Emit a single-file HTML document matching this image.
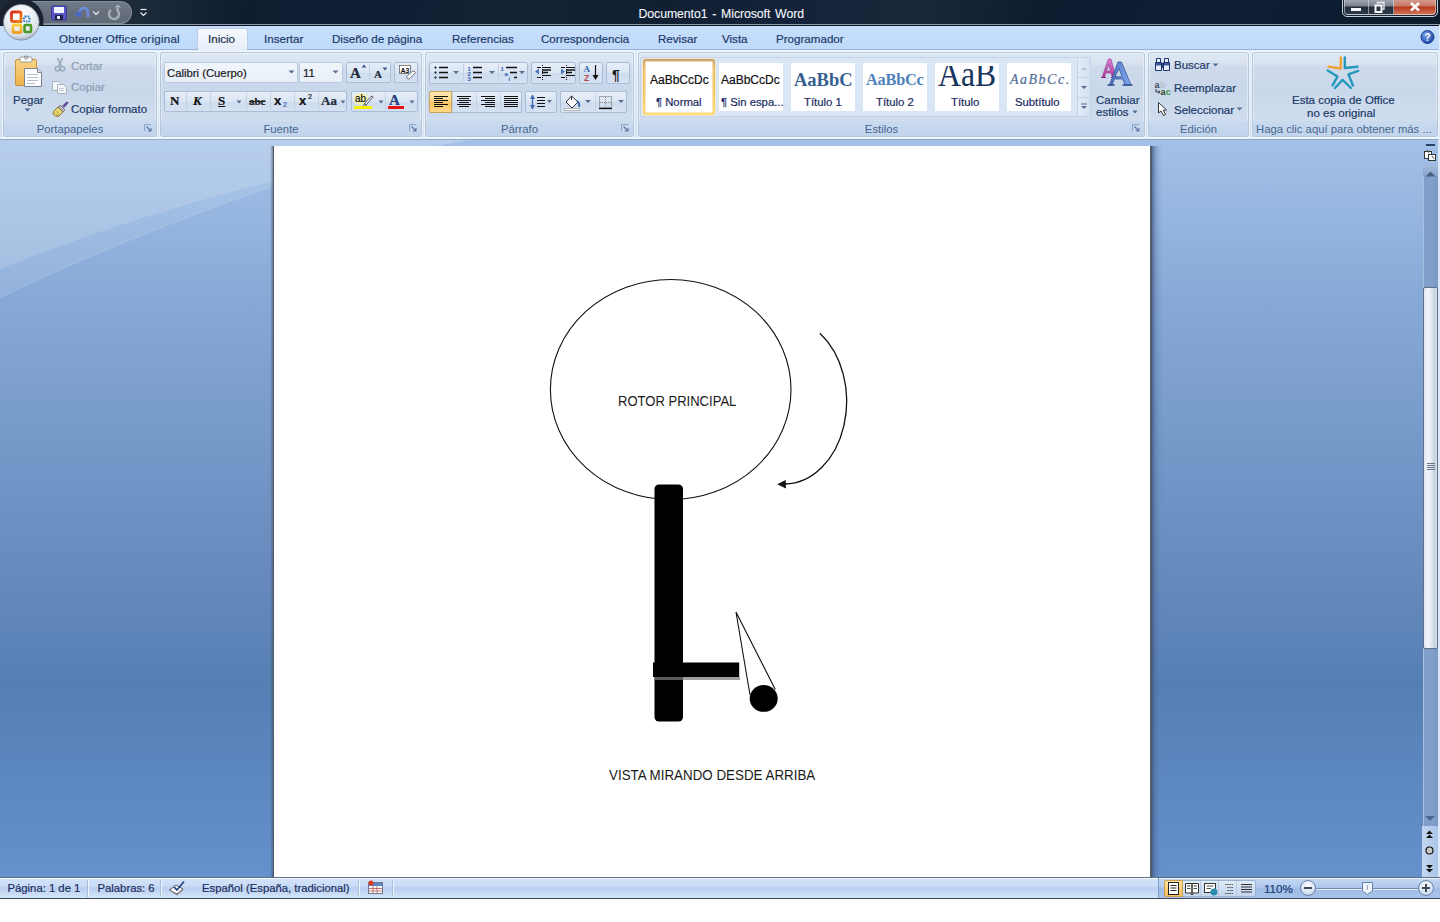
<!DOCTYPE html>
<html><head><meta charset="utf-8">
<style>
*{margin:0;padding:0;box-sizing:border-box}
html,body{width:1440px;height:922px;overflow:hidden;background:#fff;font-family:"Liberation Sans",sans-serif;font-size:11.5px;color:#1c3a68}
.a{position:absolute}
.t{position:absolute;white-space:nowrap;line-height:14px;-webkit-text-stroke:.2px currentColor}
#title{left:0;top:0;width:1440px;height:26px;background:linear-gradient(105deg,#1b2838 0%,#1d2a3a 10%,#0f1d30 17%,#0e1e34 26%,#152434 36%,#101f32 46%,#14233a 56%,#182838 64%,#0e1c30 72%,#0f1e34 85%,#0c1a2c 100%);border-bottom:1px solid #0c1420;box-shadow:inset 0 -1px 0 #8b9aab}
#tabs{left:0;top:26px;width:1440px;height:24px;background:linear-gradient(#c6defc,#c0dafb)}
#ribbon{left:0;top:49px;width:1440px;height:91px;background:linear-gradient(#dcebfa,#d6e5f6 60%,#cfdff2);border-top:1px solid #9cb0d2;border-bottom:1px solid #94abc8}
#ribbon:before{content:"";position:absolute;left:0;right:0;top:0;height:2px;background:#e2f3fd}
#ribbon:after{content:"";position:absolute;left:0;right:0;bottom:0;height:2px;background:#e4f6fe}
.grp{position:absolute;top:52px;height:85px;border:1px solid #b6c6d8;border-radius:3px;background:linear-gradient(#dfe7f3 0%,#d9e3f0 13%,#cfdbec 17%,#c9d7eb 45%,#cfdcee 75%,#d6e2f1 100%);box-shadow:inset 0 0 0 1px rgba(255,255,255,.35),0 0 0 1px rgba(255,255,255,.55)}
.glab{position:absolute;left:0;right:0;bottom:0;height:15px;background:linear-gradient(#c9daef,#c1d4ec);text-align:center;line-height:14px;padding-top:1px;color:#46668f;font-size:11.3px}
.lnch{position:absolute;right:4px;bottom:4px}
.bx{position:absolute;border:1px solid #a9bdd8;border-radius:2px;background:linear-gradient(#e6eef8,#dae5f3 50%,#cfdcef 51%,#d6e2f2)}
.sp{position:absolute;top:1px;bottom:1px;width:1px;background:#c2d2e6}
#doc{left:0;top:140px;width:1439px;height:737px;background:linear-gradient(#a3c1e8 0%,#a1c0e7 1.4%,#87a9d7 21.7%,#7498c8 42%,#6689bd 60.3%,#557fb3 73.8%,#5d88c0 87.4%,#6591cc 100%)}
#page{left:273px;top:146px;width:877px;height:731px;background:#fff;border-left:1px solid #525c6c}
#shadow{left:1150px;top:146px;width:13px;height:731px;background:linear-gradient(90deg,#585f6e 0,#585f6e 1px,#4f5a6c 1px,#4f5a6c 2px,rgba(60,80,125,.72) 2px,rgba(75,100,145,.45) 4.5px,rgba(90,120,170,.2) 8px,rgba(100,130,180,0) 13px)}
#vscroll{left:1421px;top:140px;width:18px;height:738px;background:transparent}
#rightedge{left:1438px;top:140px;width:2px;height:737px;background:#dfe8f6}
#status{left:0;top:877px;width:1440px;height:22px;background:linear-gradient(#d3e4f9,#c9dcf6 40%,#b9d0f0 50%,#c6daf4 75%,#d6e5f8);border-top:1px solid #5f6d80;border-bottom:1px solid #3c4a5c;box-shadow:inset 0 1px 0 #f4f9ff}
.sep{position:absolute;top:880px;width:2px;height:17px;border-left:1px solid #a6bedd;border-right:1px solid #eef5fd}
</style></head><body>
<!-- TITLE BAR -->
<div id="title" class="a"></div>
<!-- QAT -->
<div class="a" style="left:30px;top:1px;width:102px;height:23px;border-radius:0 12px 12px 0;background:linear-gradient(#707a86,#666f7b 50%,#606a76);border:1px solid #838c98;border-left:none"></div>
<div class="a" style="left:0;top:0;width:46px;height:25px;background:radial-gradient(circle at 21px 21px,#1a2230 0,#1a2230 22px,rgba(26,34,48,0) 23px)"></div>
<svg class="a" style="left:50px;top:5px" width="18" height="16"><rect x="1.5" y="1" width="15" height="14" rx="1.5" fill="#5a56c8" stroke="#3a34a0"/><rect x="4" y="2" width="10" height="6" fill="#f0f2ff"/><rect x="5" y="10" width="8" height="5" fill="#1e2240"/><rect x="7" y="11" width="3" height="3" fill="#e8e8f8"/></svg>
<svg class="a" style="left:73px;top:5px" width="18" height="14"><path d="M6 9 Q7 3 11 3 Q15 3 15 8 V12" fill="none" stroke="#6a8ede" stroke-width="2.6"/><path d="M1 9 L8.5 6 L7.5 12.5 Z" fill="#4a6ad0"/></svg>
<svg class="a" style="left:92px;top:10px" width="8" height="6"><path d="M1 1.5 L4 4.5 L7 1.5" fill="none" stroke="#e8eef8" stroke-width="1.2"/></svg>
<svg class="a" style="left:105px;top:4px" width="18" height="17"><path d="M6 6 A 5 5 0 1 0 12.5 6.5 V4" fill="none" stroke="#a4aeb8" stroke-width="2.4"/><path d="M9.5 3.5 H16 L12.8 0.8 Z" fill="#b4bcc6"/></svg>
<svg class="a" style="left:139px;top:8px" width="9" height="9"><path d="M1.5 1.5 H7.5" stroke="#e8eef8" stroke-width="1.2"/><path d="M1.5 4.5 L4.5 7.5 L7.5 4.5" fill="none" stroke="#e8eef8" stroke-width="1.2"/></svg>
<div class="t" style="left:638.5px;top:7px;font-size:12.3px;color:#f2f6fb;letter-spacing:-.08px;word-spacing:1.5px;-webkit-text-stroke:.1px currentColor">Documento1 - Microsoft Word</div>
<!-- window buttons -->
<div class="a" style="left:1342px;top:-3px;width:96px;height:20px;border:1px solid #c4ccd6;border-radius:0 0 5px 5px;background:#1a2230"></div>
<div class="a" style="left:1344px;top:0;width:25px;height:15px;border:1px solid rgba(220,228,238,.55);border-top:none;border-radius:0 0 0 4px;background:linear-gradient(#a0a6ae,#7c848e 40%,#25303e 52%,#2c3846)"></div>
<div class="a" style="left:1369px;top:0;width:25px;height:15px;border:1px solid rgba(220,228,238,.55);border-top:none;border-left:none;background:linear-gradient(#a0a6ae,#7c848e 40%,#25303e 52%,#2c3846)"></div>
<div class="a" style="left:1394px;top:0;width:42px;height:15px;border:1px solid rgba(240,210,200,.6);border-top:none;border-left:none;border-radius:0 0 4px 0;background:linear-gradient(#d49a8c,#c87a66 40%,#b83a1c 52%,#c65a3e 80%,#cc7058)"></div>
<div class="a" style="left:1351px;top:8px;width:10px;height:3px;background:#f4f6fa"></div>
<svg class="a" style="left:1373px;top:1px" width="14" height="13"><path d="M4.5 3 V1.5 H11 V8 H9.5" fill="none" stroke="#f0f2f6" stroke-width="1.3"/><rect x="2.5" y="4.5" width="6" height="6.5" fill="#2c3642" stroke="#f8f9fb" stroke-width="2"/><rect x="4.6" y="6.6" width="1.8" height="2.3" fill="#2c3642"/></svg>
<svg class="a" style="left:1409px;top:1px" width="12" height="11"><path d="M2 2 L10 9.5 M10 2 L2 9.5" stroke="#fcfcfc" stroke-width="2.6"/></svg>
<!-- TABS -->
<div id="tabs" class="a"></div>
<div class="a" style="left:197px;top:28px;width:51px;height:23px;border:1px solid #b9cee8;border-bottom:none;border-radius:3px 3px 0 0;background:linear-gradient(#f6f9fd,#edf3fb 50%,#e6eef8)"></div>
<div class="t" style="left:59px;top:32px;font-size:11.6px;letter-spacing:.22px">Obtener Office original</div>
<div class="t" style="left:208px;top:32px;font-size:11.6px;color:#1e2f4e">Inicio</div>
<div class="t" style="left:264px;top:32px;font-size:11.6px">Insertar</div>
<div class="t" style="left:332px;top:32px;font-size:11.6px">Diseño de página</div>
<div class="t" style="left:452px;top:32px;font-size:11.6px">Referencias</div>
<div class="t" style="left:541px;top:32px;font-size:11.6px">Correspondencia</div>
<div class="t" style="left:658px;top:32px;font-size:11.6px">Revisar</div>
<div class="t" style="left:722px;top:32px;font-size:11.6px">Vista</div>
<div class="t" style="left:776px;top:32px;font-size:11.6px">Programador</div>
<svg class="a" style="left:1420px;top:29px" width="16" height="16"><defs><radialGradient id="hp" cx="40%" cy="35%" r="60%"><stop offset="0" stop-color="#7fa6ec"/><stop offset="1" stop-color="#1f4fb0"/></radialGradient></defs><circle cx="7.5" cy="8" r="6.5" fill="url(#hp)" stroke="#1a3f8a"/><text x="7.5" y="12" font-family="Liberation Sans" font-size="10" font-weight="bold" fill="#fff" text-anchor="middle">?</text></svg>
<!-- office button -->
<svg class="a" style="left:0;top:0" width="46" height="46"><defs><radialGradient id="ob" cx="45%" cy="30%" r="70%"><stop offset="0" stop-color="#ffffff"/><stop offset=".5" stop-color="#eef2f6"/><stop offset=".85" stop-color="#d4dce6"/><stop offset="1" stop-color="#a8b4c2"/></radialGradient><linearGradient id="lr" x1="0" y1="0" x2="1" y2="1"><stop offset="0" stop-color="#d8281a"/><stop offset="1" stop-color="#f08a20"/></linearGradient><linearGradient id="ly" x1="0" y1="0" x2="0" y2="1"><stop offset="0" stop-color="#f8d040"/><stop offset="1" stop-color="#f0a020"/></linearGradient></defs>
<circle cx="21.3" cy="22.3" r="17.8" fill="url(#ob)" stroke="#7c8898" stroke-width=".8"/>
<rect x="11.5" y="12" width="9.5" height="9.5" rx="1.5" fill="none" stroke="url(#lr)" stroke-width="2.8"/>
<rect x="24" y="16.5" width="5.5" height="5" rx="1" fill="none" stroke="#2a7ac8" stroke-width="2" stroke-dasharray="1.6 1"/>
<rect x="13" y="25" width="8" height="7.5" rx="1" fill="none" stroke="url(#ly)" stroke-width="2.8"/>
<rect x="24.5" y="25" width="6.5" height="7" rx="1" fill="none" stroke="#4a9a28" stroke-width="2.6"/>
<circle cx="21" cy="22" r="1.1" fill="#c05a20"/></svg>
<!-- RIBBON -->
<div id="ribbon" class="a"></div>
<div class="a" style="left:198px;top:48px;width:49px;height:3px;background:linear-gradient(#e6eef8,#e2f0fc)"></div>
<div class="grp" style="left:3px;width:154px"><div class="glab" style="padding-right:20px">Portapapeles</div><svg class="lnch" width="8" height="8"><path d="M0.5 7 V0.5 H7" fill="none" stroke="#8aa4c8"/><path d="M2.5 2.5 L5.5 5.5" stroke="#5b76a0" stroke-width="1.2"/><path d="M7.5 3.5 V7.5 H3.5 Z" fill="#5b76a0"/></svg></div>
<div class="grp" style="left:160px;width:262px"><div class="glab" style="padding-right:20px">Fuente</div><svg class="lnch" width="8" height="8"><path d="M0.5 7 V0.5 H7" fill="none" stroke="#8aa4c8"/><path d="M2.5 2.5 L5.5 5.5" stroke="#5b76a0" stroke-width="1.2"/><path d="M7.5 3.5 V7.5 H3.5 Z" fill="#5b76a0"/></svg></div>
<div class="grp" style="left:425px;width:209px"><div class="glab" style="padding-right:20px">Párrafo</div><svg class="lnch" width="8" height="8"><path d="M0.5 7 V0.5 H7" fill="none" stroke="#8aa4c8"/><path d="M2.5 2.5 L5.5 5.5" stroke="#5b76a0" stroke-width="1.2"/><path d="M7.5 3.5 V7.5 H3.5 Z" fill="#5b76a0"/></svg></div>
<div class="grp" style="left:638px;width:507px"><div class="glab" style="padding-right:20px">Estilos</div><svg class="lnch" width="8" height="8"><path d="M0.5 7 V0.5 H7" fill="none" stroke="#8aa4c8"/><path d="M2.5 2.5 L5.5 5.5" stroke="#5b76a0" stroke-width="1.2"/><path d="M7.5 3.5 V7.5 H3.5 Z" fill="#5b76a0"/></svg></div>
<div class="grp" style="left:1148px;width:101px"><div class="glab">Edición</div></div>
<div class="grp" style="left:1252px;width:186px"><div class="glab" style="text-align:left;padding-left:3px">Haga clic aquí para obtener más ...</div></div>
<!-- PORTAPAPELES -->
<svg class="a" style="left:13px;top:55px" width="32" height="34"><defs><linearGradient id="cb" x1="0" y1="0" x2="0" y2="1"><stop offset="0" stop-color="#f7d488"/><stop offset="1" stop-color="#eeb34a"/></linearGradient></defs>
<rect x="2.5" y="4.5" width="21" height="26" rx="1.5" fill="url(#cb)" stroke="#c9953c"/>
<rect x="7" y="2" width="12" height="5" rx="1" fill="#fdfdfd" stroke="#8a8a8a" stroke-width=".8"/><circle cx="13" cy="2.5" r="1.6" fill="none" stroke="#777" stroke-width=".8"/>
<path d="M11.5 13.5 H24.5 L28.5 17.5 V31.5 H11.5 Z" fill="#fbfcfe" stroke="#7b8494"/><path d="M24.5 13.5 V17.5 H28.5" fill="#dfe3ea" stroke="#7b8494"/>
<path d="M14 19.5 H25 M14 22.5 H25 M14 25.5 H25 M14 28.5 H22" stroke="#b8c0cc" stroke-width="1"/></svg>
<div class="t" style="left:13px;top:93px">Pegar</div>
<svg class="a" style="left:24px;top:108px" width="7" height="4"><path d="M0.5 0.5 H6.5 L3.5 3.5 Z" fill="#4c6a98"/></svg>
<svg class="a" style="left:53px;top:57px" width="14" height="15"><path d="M4.5 1 L8.2 9.2 M9.5 1 L5.8 9.2" stroke="#9aaabe" stroke-width="1.7"/><circle cx="4.5" cy="11.8" r="2.2" fill="none" stroke="#9aaabe" stroke-width="1.5"/><circle cx="9.5" cy="11.8" r="2.2" fill="none" stroke="#9aaabe" stroke-width="1.5"/></svg>
<div class="t" style="left:71px;top:58.5px;color:#8d9db3">Cortar</div>
<svg class="a" style="left:51px;top:80px" width="17" height="14"><path d="M1.5 1.5 H7.5 L9.5 3.5 V10.5 H1.5 Z" fill="#f4f6f8" stroke="#a9b3c0"/><path d="M6.5 4.5 H12.5 L15.5 7.5 V13.5 H6.5 Z" fill="#f4f6f8" stroke="#a9b3c0"/><path d="M8 8.5 H13 M8 10.5 H13" stroke="#c0c8d2"/></svg>
<div class="t" style="left:71px;top:79.5px;color:#8d9db3">Copiar</div>
<svg class="a" style="left:52px;top:101px" width="17" height="16"><path d="M10.5 5 L14.5 1 Q16 0.5 16 2 L12 6.5 Z" fill="#6a4c9c" stroke="#4a3078" stroke-width=".6"/><path d="M8 4 L13 9 L11 11 L6 6 Z" fill="#b8b8c8" stroke="#555" stroke-width=".6"/><path d="M6 6 L11 11 L6.5 15.5 Q3 15.5 1 13 Q1 10.5 1.5 10.5 Z" fill="#e8d470" stroke="#6a5a20" stroke-width=".8"/><path d="M3 11.5 L6.5 15 M4.5 10 L8 13.5" stroke="#b09838" stroke-width=".7"/></svg>
<div class="t" style="left:71px;top:102px">Copiar formato</div>
<!-- FUENTE -->
<div class="a" style="left:164px;top:62px;width:134px;height:21px;border:1px solid #b9cbe2;border-radius:2px;background:linear-gradient(#f0f5fb,#e8eff8)"></div>
<div class="t" style="left:167px;top:65.5px;color:#1a1a1a;font-size:11.3px">Calibri (Cuerpo)</div>
<svg class="a" style="left:288px;top:70px" width="7" height="4"><path d="M0.5 0.5 H6.5 L3.5 3.5 Z" fill="#5a6f90"/></svg>
<div class="a" style="left:299px;top:62px;width:44px;height:21px;border:1px solid #b9cbe2;border-radius:2px;background:linear-gradient(#f0f5fb,#e8eff8)"></div>
<div class="t" style="left:303px;top:65.5px;color:#1a1a1a;font-size:11.3px">11</div>
<svg class="a" style="left:332px;top:70px" width="7" height="4"><path d="M0.5 0.5 H6.5 L3.5 3.5 Z" fill="#5a6f90"/></svg>
<div class="bx" style="left:346px;top:62px;width:45px;height:21px"><div class="sp" style="left:22px"></div></div>
<div class="t" style="left:350px;top:64px;color:#1e2a3a;font-family:'Liberation Serif';font-weight:bold;font-size:15px;line-height:18px">A</div>
<svg class="a" style="left:361px;top:64px" width="6" height="4"><path d="M0.5 3.5 H5.5 L3 0.5 Z" fill="#3a5a8a"/></svg>
<div class="t" style="left:374px;top:67px;color:#1e2a3a;font-family:'Liberation Serif';font-weight:bold;font-size:11px;line-height:14px">A</div>
<svg class="a" style="left:382px;top:67px" width="6" height="4"><path d="M0.5 0.5 H5.5 L3 3.5 Z" fill="#3a5a8a"/></svg>
<div class="bx" style="left:394px;top:62px;width:24px;height:21px"></div>
<svg class="a" style="left:397px;top:64px" width="20" height="18"><rect x="2.5" y="1.5" width="11" height="8" fill="#fff" stroke="#666" stroke-width=".8"/><text x="8" y="8.5" font-family="Liberation Sans" font-weight="bold" font-size="7" fill="#111" text-anchor="middle">A3</text><path d="M9.5 13 L15 7.5 Q17.5 6 18.5 8.5 L13 14.5 Q11 16.5 9.5 13 Z" fill="#f6f7fa" stroke="#777" stroke-width="1"/></svg>
<div class="bx" style="left:164px;top:91px;width:183px;height:21px"><div class="sp" style="left:21px"></div><div class="sp" style="left:45px"></div><div class="sp" style="left:81px"></div><div class="sp" style="left:105px"></div><div class="sp" style="left:129px"></div><div class="sp" style="left:153px"></div></div>
<div class="t" style="left:170px;top:93px;color:#111;font-family:'Liberation Serif';font-weight:bold;font-size:13px;line-height:16px">N</div>
<div class="t" style="left:193px;top:93px;color:#111;font-family:'Liberation Serif';font-weight:bold;font-style:italic;font-size:13px;line-height:16px">K</div>
<div class="t" style="left:218px;top:93px;color:#111;font-family:'Liberation Serif';font-weight:bold;font-size:13px;line-height:16px;text-decoration:underline">S</div>
<svg class="a" style="left:236px;top:100px" width="6" height="4"><path d="M0.5 0.5 H5.5 L3 3.5 Z" fill="#5a6f90"/></svg>
<div class="t" style="left:249px;top:94px;color:#222;font-family:'Liberation Serif';font-weight:bold;font-size:11px;line-height:14px;text-decoration:line-through">abc</div>
<div class="t" style="left:274px;top:93px;color:#111;font-family:'Liberation Sans';font-weight:bold;font-size:13px;line-height:16px">x</div>
<div class="t" style="left:283px;top:101px;color:#3a64c0;font-size:7px;line-height:8px">2</div>
<div class="t" style="left:299px;top:93px;color:#111;font-family:'Liberation Sans';font-weight:bold;font-size:13px;line-height:16px">x</div>
<div class="t" style="left:308px;top:93px;color:#111;font-size:7px;line-height:8px">2</div>
<div class="t" style="left:321px;top:93px;color:#1e2a3a;font-family:'Liberation Serif';font-weight:bold;font-size:13px;line-height:16px">Aa</div>
<svg class="a" style="left:340px;top:100px" width="6" height="4"><path d="M0.5 0.5 H5.5 L3 3.5 Z" fill="#5a6f90"/></svg>
<div class="bx" style="left:351px;top:91px;width:67px;height:21px"><div class="sp" style="left:33px"></div></div>
<div class="a" style="left:354px;top:93px;width:14px;height:12px;border-radius:7px;background:rgba(255,250,120,.55)"></div><div class="t" style="left:355px;top:93px;color:#111;font-size:10px;line-height:12px">ab</div>
<svg class="a" style="left:362px;top:94px" width="12" height="12"><path d="M2.5 9.5 L9 2.5 Q10.5 1.5 11 3 L4.5 10.5 Z" fill="#f4f6fa" stroke="#445" stroke-width=".9"/><path d="M1 11 H5" stroke="#333" stroke-width=".8"/></svg>
<div class="a" style="left:354px;top:106px;width:18px;height:3px;background:#f5f000"></div>
<svg class="a" style="left:378px;top:100px" width="6" height="4"><path d="M0.5 0.5 H5.5 L3 3.5 Z" fill="#5a6f90"/></svg>
<div class="t" style="left:389px;top:92px;color:#243f7c;font-family:'Liberation Serif';font-weight:bold;font-size:15px;line-height:16px">A</div>
<div class="a" style="left:388px;top:106px;width:16px;height:3px;background:#e81010"></div>
<svg class="a" style="left:409px;top:100px" width="6" height="4"><path d="M0.5 0.5 H5.5 L3 3.5 Z" fill="#5a6f90"/></svg>
<!-- PARRAFO -->
<div class="bx" style="left:429px;top:62px;width:99px;height:22px"><div class="sp" style="left:33px"></div><div class="sp" style="left:68px"></div></div>
<div class="bx" style="left:531px;top:62px;width:45px;height:22px"></div>
<div class="bx" style="left:579px;top:62px;width:24px;height:22px"></div>
<div class="bx" style="left:606px;top:62px;width:24px;height:22px"></div>
<div class="bx" style="left:429px;top:91px;width:93px;height:22px"><div class="sp" style="left:22px"></div><div class="sp" style="left:46px"></div><div class="sp" style="left:70px"></div></div>
<div class="a" style="left:429px;top:91px;width:23px;height:22px;border:1px solid #c9a35a;border-radius:2px 0 0 2px;background:linear-gradient(#fde9b0,#fcd88e 40%,#f9c462 55%,#fcd98a)"></div>
<div class="bx" style="left:525px;top:91px;width:32px;height:22px"></div>
<div class="bx" style="left:560px;top:91px;width:67px;height:22px"><div class="sp" style="left:34px"></div></div>
<svg class="a" style="left:0;top:0" width="640" height="120">
<g fill="#34465e"><path d="M435.5 66 L437 67.5 L435.5 69 L434 67.5Z M435.5 71 L437 72.5 L435.5 74 L434 72.5Z M435.5 76 L437 77.5 L435.5 79 L434 77.5Z"/></g>
<path d="M439 67.5 H448 M439 72.5 H448 M439 77.5 H448" stroke="#111" stroke-width="1.5"/>
<g fill="#5a6f90"><path d="M453 71 H459 L456 74 Z M489 71 H495 L492 74 Z M519 71 H525 L522 74 Z M547 100 H552 L549.5 103 Z M585 100 H591 L588 103 Z M618 100 H624 L621 103 Z"/></g>
<g fill="#2f5fae" font-family="Liberation Sans" font-weight="bold" font-size="6"><text x="467.5" y="70.5">1</text><text x="467.5" y="75.5">2</text><text x="467.5" y="80.5">3</text><text x="500.5" y="70.5">1</text><text x="504.5" y="75.5">a</text><text x="508.5" y="80.5">i</text></g>
<path d="M473 67.5 H482 M473 72.5 H482 M473 77.5 H482" stroke="#111" stroke-width="1.5"/>
<path d="M506 67.5 H517 M510 72.5 H517 M514 77.5 H517" stroke="#111" stroke-width="1.3"/>
<path d="M537 67.5 H541 M537 77.5 H541 M542 67.5 H551 M542 75.5 H551 M561 67.5 H565 M561 77.5 H565 M566 67.5 H575 M566 75.5 H575" stroke="#111" stroke-width="1"/>
<path d="M542 70 H551 M542 72.5 H548 M566 70 H575 M566 72.5 H572" stroke="#111" stroke-width="1.6"/>
<path d="M542.5 65 V80 M566.5 65 V80" stroke="#111" stroke-dasharray="1 1"/>
<path d="M535 71.5 L539 68.5 V74.5 Z M565 71.5 L561 68.5 V74.5 Z" fill="#4a78c0"/>
<text x="583.5" y="72" font-family="Liberation Serif" font-weight="bold" font-size="9" fill="#2f5fae">A</text><text x="584" y="80.5" font-family="Liberation Sans" font-weight="bold" font-size="8.5" fill="#c04848">Z</text>
<path d="M595.5 65 V79" stroke="#111" stroke-width="1.2"/><path d="M592.5 75 L595.5 80 L598.5 75" fill="#111"/>
<text x="612" y="79.5" font-family="Liberation Sans" font-weight="bold" font-size="14" fill="#1a1a1a">¶</text>
<path d="M434 96.5 H448 M434 98.5 H443 M434 100.5 H448 M434 102.5 H443 M434 104.5 H448 M434 106.5 H443" stroke="#111" stroke-width="1.1"/>
<path d="M457 96.5 H471 M459 98.5 H469 M457 100.5 H471 M459 102.5 H469 M457 104.5 H471 M459 106.5 H469" stroke="#111" stroke-width="1.1"/>
<path d="M481 96.5 H495 M485 98.5 H495 M481 100.5 H495 M485 102.5 H495 M481 104.5 H495 M485 106.5 H495" stroke="#111" stroke-width="1.1"/>
<path d="M504 96.5 H518 M504 98.5 H518 M504 100.5 H518 M504 102.5 H518 M504 104.5 H518 M504 106.5 H518" stroke="#111" stroke-width="1.1"/>
<path d="M532.5 95 V109" stroke="#3e68b0" stroke-width="1.3"/><path d="M530 99 L532.5 94.5 L535 99 Z M530 105 L532.5 109.5 L535 105 Z" fill="#3e68b0"/>
<path d="M537 97.5 H545 M537 100.5 H545 M537 103.5 H545 M537 106.5 H545" stroke="#111" stroke-width="1.2"/>
<path d="M566 102 L571.5 96 L578 102 L572 108 Z" fill="#fff" stroke="#333"/><path d="M571.5 96 V100" stroke="#333"/><path d="M577 101 Q580 103 579 107" fill="none" stroke="#3a66b0" stroke-width="2"/><rect x="564.5" y="108.5" width="15" height="2" fill="#fff" stroke="#aaa" stroke-width=".8"/>
<rect x="599.5" y="96.5" width="12" height="11" fill="none" stroke="#666" stroke-dasharray="1 1"/><path d="M605.5 97 V107 M600 102.5 H611" stroke="#888" stroke-dasharray="1 1"/><path d="M599 108.5 H612" stroke="#111" stroke-width="1.3"/>
</svg>
<!-- ESTILOS -->
<div class="a" style="left:640px;top:57px;width:451px;height:60px;border:1px solid #c3d3e8;border-radius:2px;background:#dbe6f4"></div>
<div class="a" style="left:643px;top:59px;width:72px;height:56px;border-radius:3px;background:linear-gradient(#c09060,#eab050 15%,#f2c050 60%,#f8d868);box-shadow:0 0 1px 1px rgba(255,240,190,.6)"></div><div class="a" style="left:646px;top:62px;width:66px;height:50px;background:#fff;box-shadow:0 0 2px 1px #fdf2d8"></div>
<div class="a" style="left:719px;top:63px;width:64px;height:48px;background:#fff"></div>
<div class="a" style="left:791px;top:63px;width:64px;height:48px;background:#fff"></div>
<div class="a" style="left:863px;top:63px;width:64px;height:48px;background:#fff"></div>
<div class="a" style="left:935px;top:63px;width:64px;height:48px;background:#fff"></div>
<div class="a" style="left:1007px;top:63px;width:64px;height:48px;background:#fff"></div>
<div class="a" style="left:649px;top:73px;width:60px;height:14px;overflow:hidden"><div class="t" style="left:1px;top:0;color:#111;font-size:12px">AaBbCcDc</div></div>
<div class="t" style="left:656px;top:95px;color:#1c2b64;font-size:11.3px">¶ Normal</div>
<div class="a" style="left:720px;top:73px;width:60px;height:14px;overflow:hidden"><div class="t" style="left:1px;top:0;color:#111;font-size:12px">AaBbCcDc</div></div>
<div class="t" style="left:721px;top:95px;color:#1c2b64;font-size:11.3px">¶ Sin espa...</div>
<div class="a" style="left:793px;top:69px;width:59px;height:22px;overflow:hidden"><div class="t" style="left:1px;top:0;color:#365f91;font-family:'Liberation Serif';font-weight:bold;font-size:18.5px;line-height:22px;-webkit-text-stroke:0">AaBbCc</div></div>
<div class="t" style="left:804px;top:95px;color:#1c2b64;font-size:11.3px">Título 1</div>
<div class="a" style="left:865px;top:69px;width:60px;height:21px;overflow:hidden"><div class="t" style="left:1px;top:0;color:#4f81bd;font-family:'Liberation Serif';font-weight:bold;font-size:16.3px;line-height:21px;-webkit-text-stroke:0;letter-spacing:-.2px">AaBbCc</div></div>
<div class="t" style="left:876px;top:95px;color:#1c2b64;font-size:11.3px">Título 2</div>
<div class="a" style="left:936px;top:66px;width:62px;height:21px;overflow:hidden"><div class="t" style="left:2px;top:-10.5px;color:#17365d;font-family:'Liberation Serif';font-size:36px;line-height:36px;transform:scaleX(.88);transform-origin:0 0;-webkit-text-stroke:0">AaB</div></div>
<div class="t" style="left:951px;top:95px;color:#1c2b64;font-size:11.3px">Título</div>
<div class="a" style="left:1009px;top:70px;width:60px;height:20px;overflow:hidden"><div class="t" style="left:1px;top:0;color:#4f6f9a;font-family:'Liberation Serif';font-style:italic;font-size:14px;line-height:20px;letter-spacing:1.5px">AaBbCc.</div></div>
<div class="t" style="left:1015px;top:95px;color:#1c2b64;font-size:11.3px">Subtítulo</div>
<div class="a" style="left:1077px;top:57px;width:14px;height:60px;border:1px solid #c3d3e8;border-radius:0 2px 2px 0;background:linear-gradient(90deg,#e2ebf6,#d4e1f2)"></div>
<div class="a" style="left:1077px;top:77px;width:14px;height:1px;background:#c3d3e8"></div>
<div class="a" style="left:1077px;top:97px;width:14px;height:1px;background:#c3d3e8"></div>
<svg class="a" style="left:1080px;top:66px" width="8" height="44"><path d="M1 4 H7 L4 1 Z" fill="#b4c2d4"/><path d="M1 20 H7 L4 23 Z" fill="#5a6f90"/><path d="M1 38 H7" stroke="#5a6f90"/><path d="M1 40 H7 L4 43 Z" fill="#5a6f90"/></svg>
<svg class="a" style="left:0;top:0" width="1140" height="90"><defs><linearGradient id="ce1" x1="0" y1="0" x2="0" y2="1"><stop offset="0" stop-color="#e080d8"/><stop offset="1" stop-color="#b03898"/></linearGradient><linearGradient id="ce2" x1="0" y1="0" x2="1" y2="0"><stop offset="0" stop-color="#4a70c0"/><stop offset="1" stop-color="#80a8ec"/></linearGradient></defs>
<path fill-rule="evenodd" d="M1102 77.5 L1108.3 59 H1111 L1116 77.5 H1112.3 L1111 73 H1105.8 L1104.5 77.5 Z M1106.4 71 H1110.4 L1108.9 64.5 Z" fill="url(#ce1)" stroke="#8a3a8a" stroke-width=".6"/>
<path d="M1101 77.5 H1106 M1111 77.5 H1117" stroke="#7a2a7a" stroke-width="1.2"/>
<path fill-rule="evenodd" d="M1109.5 85 L1118 62 H1121.5 L1131 85 H1125 L1122.8 79 H1114.3 L1112.2 85 Z M1115 76.8 H1122 L1119 68.5 Z" fill="url(#ce2)" stroke="#2e4e90" stroke-width=".7"/>
<path d="M1107.5 85 H1114.5 M1122.5 85 H1132.5" stroke="#2e4e90" stroke-width="1.3"/></svg>
<div class="t" style="left:1096px;top:92.5px">Cambiar</div>
<div class="t" style="left:1096px;top:105px">estilos</div>
<svg class="a" style="left:1132px;top:110px" width="6" height="4"><path d="M0.5 0.5 H5.5 L3 3.5 Z" fill="#4c6a98"/></svg>
<!-- EDICION -->
<svg class="a" style="left:1154px;top:57px" width="18" height="15"><g stroke="#1f3570" stroke-width="1" fill="#e8eef8"><path d="M2.5 1.5 H6.5 V5.5 H2.5 Z M10.5 1.5 H14.5 V5.5 H10.5 Z"/><path d="M1.5 5.5 H7.5 V13.5 H1.5 Z M9.5 5.5 H15.5 V13.5 H9.5 Z"/><path d="M7.5 6.5 H9.5 V10.5 H7.5 Z" fill="#2a4480"/></g><path d="M2 6 H7 V8.5 H2 Z M10 6 H15 V8.5 H10 Z" fill="#3a5a98"/></svg>
<div class="t" style="left:1174px;top:58px">Buscar</div>
<svg class="a" style="left:1212px;top:63px" width="7" height="4"><path d="M0.5 0.5 H6.5 L3.5 3.5 Z" fill="#5a6f90"/></svg>
<svg class="a" style="left:1154px;top:79px" width="19" height="17"><text x="0.5" y="8.5" font-family="Liberation Sans" font-weight="bold" font-size="9" fill="#404a58">a</text><text x="6" y="8.5" font-family="Liberation Sans" font-weight="bold" font-size="9" fill="#b8c0cc">b</text><text x="6.5" y="15.5" font-family="Liberation Sans" font-weight="bold" font-size="9" fill="#2e3e30">a</text><text x="11.8" y="15.5" font-family="Liberation Sans" font-weight="bold" font-size="9" fill="#3a9a3a">c</text><path d="M2 10 V13 H5.5" fill="none" stroke="#333" stroke-width="1"/><path d="M4.5 11.5 L6 13 L4.5 14.5" fill="none" stroke="#333" stroke-width="1"/></svg>
<div class="t" style="left:1174px;top:80.5px">Reemplazar</div>
<svg class="a" style="left:1157px;top:101px" width="12" height="16"><path d="M1.5 1.5 V12 L4 10 L6.5 14.5 L8.5 13.5 L6.3 9.2 L9.5 9 Z" fill="#fff" stroke="#333" stroke-width="1"/></svg>
<div class="t" style="left:1174px;top:102.5px">Seleccionar</div>
<svg class="a" style="left:1236px;top:107px" width="7" height="4"><path d="M0.5 0.5 H6.5 L3.5 3.5 Z" fill="#5a6f90"/></svg>
<!-- OFFICE GENUINE -->
<svg class="a" style="left:0;top:0" width="1440" height="100"><g fill="none" stroke-width="2.4" stroke-linejoin="round" stroke-linecap="round">
<path d="M1344.8 57.5 L1344.8 68 L1357.5 66.8" stroke="#2698bc"/>
<path d="M1358.2 70.8 L1348.4 74.3 L1353 85.5" stroke="#2698bc"/>
<path d="M1351 88 L1342.6 79.8 L1335 88" stroke="#2698bc"/>
<path d="M1332.5 85.3 L1337.5 76.6 L1327.7 70.4" stroke="#2698bc"/>
<path d="M1340.9 57.5 L1340.6 68.6 L1328.6 66.6" stroke="#f2a030"/></g></svg>
<div class="t" style="left:1292px;top:92.5px">Esta copia de Office</div>
<div class="t" style="left:1307px;top:105.5px">no es original</div>
<!-- DOCUMENT AREA -->
<div id="doc" class="a"></div>
<svg class="a" style="left:0;top:140px" width="600" height="200"><path d="M0 129 Q220 42 470 0 L0 0 Z" fill="rgba(255,255,255,.22)"/><path d="M0 129 Q124 80 274 41 L274 46 Q120 100 0 158 Z" fill="rgba(255,255,255,.1)"/><path d="M0 157.5 Q120 99.5 274 45.5" fill="none" stroke="rgba(255,255,255,.08)" stroke-width="1.5"/></svg>
<div class="a" style="left:270px;top:146px;width:3px;height:731px;background:linear-gradient(90deg,rgba(60,70,90,0),rgba(60,70,90,.1) 33%,rgba(70,80,100,.45) 66%,rgba(70,80,100,.5))"></div>
<div id="page" class="a"></div>
<div id="shadow" class="a"></div>
<svg class="a" style="left:0;top:0" width="1440" height="922">
<ellipse cx="670.7" cy="389.5" rx="120.3" ry="110" fill="none" stroke="#111" stroke-width="1.1"/>
<path d="M819.8 333.3 A 62.3 82.7 0 0 1 785 484" fill="none" stroke="#111" stroke-width="1.3"/>
<path d="M777.2 484.3 L785.7 480.1 L786 488.4 Z" fill="#111"/>
<rect x="654.5" y="484.5" width="28.5" height="237" rx="4.5" fill="#000"/>
<rect x="655" y="677" width="85" height="3" fill="#a0a0a0"/>
<rect x="655" y="677" width="28" height="3" fill="#5a5a5a"/>
<rect x="653" y="662.5" width="86.2" height="14.5" fill="#000"/>
<path d="M736 612 L750 695 M736 612 L775.3 689.5" fill="none" stroke="#111" stroke-width="1.1"/>
<ellipse cx="763.7" cy="698.4" rx="14" ry="13.4" fill="#000"/>
</svg>
<div class="t" style="left:617.5px;top:393px;font-size:14.3px;line-height:17px;color:#1a1a1a;-webkit-text-stroke:0;transform:scaleX(.912);transform-origin:0 0">ROTOR PRINCIPAL</div>
<div class="t" style="left:608.5px;top:767px;font-size:14.3px;line-height:17px;color:#1a1a1a;-webkit-text-stroke:0;transform:scaleX(.935);transform-origin:0 0">VISTA MIRANDO DESDE ARRIBA</div>
<div id="vscroll" class="a"></div>
<div id="rightedge" class="a"></div>
<div class="a" style="left:1439px;top:25px;width:1px;height:115px;background:#e4eefa"></div>

<div class="a" style="left:1426px;top:144px;width:9px;height:2px;background:#2a3e60"></div>
<svg class="a" style="left:1423px;top:149px" width="14" height="13"><rect x="1.5" y="2.5" width="7" height="7" fill="#fff" stroke="#333"/><rect x="5.5" y="5.5" width="7" height="6" fill="#fff" stroke="#333"/><path d="M4 1 L6 4 M9 7 L11 10" stroke="#555"/></svg>
<div class="a" style="left:1423px;top:164px;width:15px;height:662px;background:linear-gradient(90deg,#a8c0e2 0,#a8c0e2 1px,#7f9dc8 1px,#819fca 60%,#7a98c4)"></div>
<div class="a" style="left:1423px;top:164px;width:15px;height:12px;background:linear-gradient(#a4bbdc,#8aa6cf)"></div>
<svg class="a" style="left:1425px;top:171px" width="12" height="6"><path d="M0.5 5.5 H10.5 L5.5 0.5 Z" fill="#4c5f7c"/></svg>
<div class="a" style="left:1423px;top:287px;width:15px;height:362px;border:1px solid #5f6f8c;border-radius:2px;background:linear-gradient(90deg,#dfe6ee,#f2f5f9 30%,#e4eaf1 55%,#c8d3e0 80%,#d6e0ec)"></div>
<svg class="a" style="left:1425px;top:462px" width="11" height="9"><path d="M2 1.5 H10 M2 3.5 H10 M2 5.5 H10 M2 7.5 H10" stroke="#6a7488"/></svg>
<svg class="a" style="left:1424px;top:815px" width="12" height="8"><path d="M1 1 H11 L6 6 Z" fill="#4a6794"/></svg>
<div class="a" style="left:1422px;top:826px;width:16px;height:52px;background:linear-gradient(90deg,#c4d7f0,#aac5ea)"></div>
<svg class="a" style="left:1424px;top:829px" width="12" height="46"><path d="M2 5 H9 L5.5 1.5 Z M2 9 H9 L5.5 5.5 Z" fill="#111"/><circle cx="5.5" cy="21.5" r="3.5" fill="#c8c8c8" stroke="#111" stroke-width="1.2"/><path d="M2 36 H9 L5.5 39.5 Z M2 40 H9 L5.5 43.5 Z" fill="#111"/></svg>
<!-- STATUS -->
<div id="status" class="a"></div>
<div class="a" style="left:1158px;top:878px;width:282px;height:20px;background:linear-gradient(#c4d9f5,#b0c9ee 45%,#9fbce6 55%,#a9c4ea);border-left:1px solid #7f9cc6;box-shadow:inset 0 1px 0 #e8f2fe"></div>
<div class="sep" style="left:87px"></div><div class="sep" style="left:160px"></div><div class="sep" style="left:358px"></div><div class="sep" style="left:392px"></div>
<div class="t" style="left:7.5px;top:881px;color:#1e2e5e;font-size:11.3px">Página: 1 de 1</div>
<div class="t" style="left:97.5px;top:881px;color:#1e2e5e;font-size:11.3px">Palabras: 6</div>
<svg class="a" style="left:168px;top:880px" width="19" height="16"><path d="M1.5 10 L8 5 L15 9 L9 14 Z" fill="#fff" stroke="#555"/><path d="M3 11 L9 15 L15 10" fill="none" stroke="#888"/><path d="M6 7 L9 10 L16 1.5" fill="none" stroke="#2c4c84" stroke-width="1.8"/></svg>
<div class="t" style="left:202px;top:881px;color:#1e2e5e;font-size:11.3px">Español (España, tradicional)</div>
<svg class="a" style="left:367px;top:880px" width="17" height="15"><rect x="1.5" y="2.5" width="14" height="11" fill="#fff" stroke="#6a7a90"/><rect x="2" y="3" width="13" height="3" fill="#5a86c8"/><path d="M2 8.5 H15 M2 11 H15 M6 6 V13 M10 6 V13" stroke="#b04040" stroke-width=".7"/><circle cx="4" cy="3" r="2.5" fill="#e03a20"/></svg>
<div class="a" style="left:1164px;top:880px;width:92px;height:17px;border:1px solid #9bb4d6;border-radius:2px;background:linear-gradient(#e2ecf8,#d0def2 50%,#c4d6ee)"></div>
<div class="a" style="left:1164px;top:880px;width:19px;height:17px;border:1px solid #c8a050;border-radius:2px 0 0 2px;background:linear-gradient(#fde3a0,#fcd078 50%,#f8bd58)"></div>
<div class="a" style="left:1200px;top:881px;width:1px;height:15px;background:#b8cbe4"></div><div class="a" style="left:1218px;top:881px;width:1px;height:15px;background:#b8cbe4"></div><div class="a" style="left:1236px;top:881px;width:1px;height:15px;background:#b8cbe4"></div>
<svg class="a" style="left:1164px;top:880px" width="92" height="17">
<rect x="4.5" y="2.5" width="10" height="12" fill="#fff" stroke="#222"/><path d="M6.5 5.5 H12.5 M6.5 8 H12.5 M6.5 10.5 H12.5" stroke="#222"/>
<path d="M21.5 3.5 H28 V13 H21.5 Z M28 3.5 H34.5 V13 H28 Z" fill="#fff" stroke="#333"/><path d="M23 6 H26.5 M23 8.5 H26.5 M29.5 6 H33 M29.5 8.5 H33" stroke="#555"/><path d="M26 13 L28 15 L30 13" fill="none" stroke="#333"/>
<rect x="40.5" y="3.5" width="11" height="9" fill="#fff" stroke="#333"/><path d="M42.5 6 H49.5 M42.5 8.5 H47" stroke="#555"/><circle cx="50" cy="12" r="3.5" fill="#2a8ab0"/>
<path d="M61 4.5 H69 M63 7.5 H69 M63 10.5 H69 M61 13.5 H69" stroke="#555" stroke-dasharray="1.5 .7"/>
<path d="M77 4.5 H88 M77 7 H88 M77 9.5 H88 M77 12 H88" stroke="#333"/></svg>
<div class="t" style="left:1264px;top:881.5px;color:#1e3a78;font-size:11.6px">110%</div>
<svg class="a" style="left:1298px;top:878px" width="142" height="20"><defs><radialGradient id="zb" cx="50%" cy="35%" r="60%"><stop offset="0" stop-color="#fff"/><stop offset="1" stop-color="#c8d8ee"/></radialGradient></defs>
<path d="M18 10.5 H120" stroke="#6f8ab0" stroke-width="1"/><path d="M18 11.5 H120" stroke="#e6f0fb" stroke-width="1"/>
<circle cx="10" cy="10" r="7.5" fill="url(#zb)" stroke="#6a82a6"/><path d="M6 10 H14" stroke="#404a5a" stroke-width="2"/>
<circle cx="128" cy="10" r="7.5" fill="url(#zb)" stroke="#6a82a6"/><path d="M124 10 H132 M128 6 V14" stroke="#404a5a" stroke-width="2"/>
<path d="M64.5 4.5 H74.5 V13 L69.5 16.5 L64.5 13 Z" fill="#eef3fa" stroke="#6a82a6"/><path d="M69.5 7 V12" stroke="#9aaac0"/></svg>
</body></html>
